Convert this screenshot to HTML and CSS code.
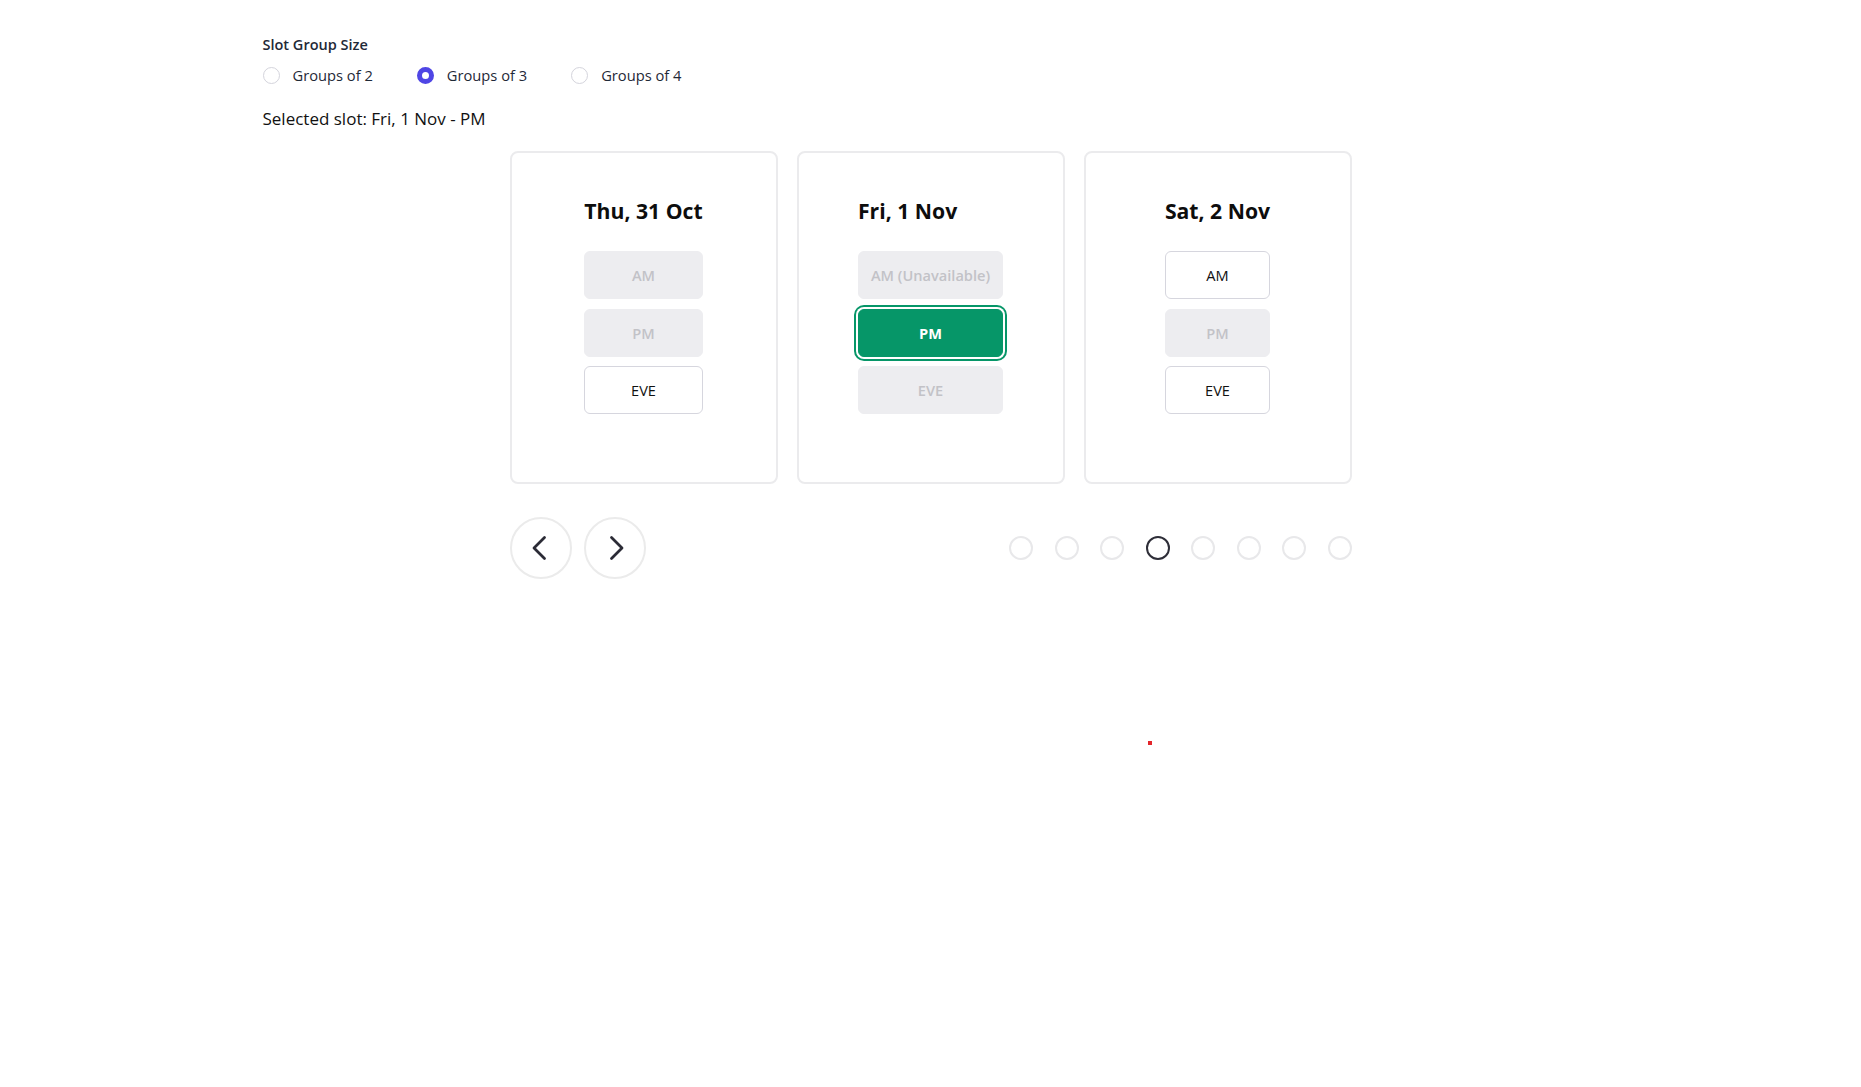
FILE: index.html
```html
<!DOCTYPE html>
<html lang="en">
<head>
<meta charset="utf-8">
<title>Slot picker</title>
<link rel="stylesheet" href="styles.css">
</head>
<body>
<div class="container">
  <div class="group-label">Slot Group Size</div>
  <div class="radio-row">
    <label class="radio-item"><input type="radio" name="size" class="radio"><span>Groups of 2</span></label>
    <label class="radio-item"><input type="radio" name="size" class="radio" checked><span>Groups of 3</span></label>
    <label class="radio-item"><input type="radio" name="size" class="radio"><span>Groups of 4</span></label>
  </div>
  <p class="selected">Selected slot: Fri, 1 Nov - PM</p>

  <div class="carousel">
    <div class="cards">
      <div class="card">
        <div class="col">
          <h3 class="day">Thu, 31 Oct</h3>
          <button class="slot off">AM</button>
          <button class="slot off">PM</button>
          <button class="slot">EVE</button>
        </div>
      </div>
      <div class="card">
        <div class="col">
          <h3 class="day">Fri, 1 Nov</h3>
          <button class="slot off">AM (Unavailable)</button>
          <button class="slot picked">PM</button>
          <button class="slot off">EVE</button>
        </div>
      </div>
      <div class="card">
        <div class="col">
          <h3 class="day">Sat, 2 Nov</h3>
          <button class="slot">AM</button>
          <button class="slot off">PM</button>
          <button class="slot">EVE</button>
        </div>
      </div>
    </div>

    <div class="nav">
      <div class="arrows">
        <button class="arrow" aria-label="Previous">
          <svg width="28" height="28" viewBox="0 0 28 28"><polyline points="17.5,3.5 7,14 17.5,24.5" fill="none" stroke="#2b2b36" stroke-width="2.8" stroke-linecap="round" stroke-linejoin="round"/></svg>
        </button>
        <button class="arrow" aria-label="Next">
          <svg width="28" height="28" viewBox="0 0 28 28"><polyline points="10.5,3.5 21,14 10.5,24.5" fill="none" stroke="#2b2b36" stroke-width="2.8" stroke-linecap="round" stroke-linejoin="round"/></svg>
        </button>
      </div>
      <div class="dots">
        <span class="dot"></span>
        <span class="dot"></span>
        <span class="dot"></span>
        <span class="dot active"></span>
        <span class="dot"></span>
        <span class="dot"></span>
        <span class="dot"></span>
        <span class="dot"></span>
      </div>
    </div>
  </div>
</div>
<span class="cursor-dot"></span>
</body>
</html>
```

FILE: styles.css
```css
* { box-sizing: border-box; }

html, body {
  margin: 0;
  padding: 0;
  background: #ffffff;
}

body {
  font-family: "Segoe UI", "Open Sans", "Noto Sans", sans-serif;
  color: #111111;
  position: relative;
  min-height: 1087px;
}

.container {
  max-width: 1400px;
  margin: 0 auto;
  padding: 35px 32px 0;
}

.group-label {
  font-size: 14.5px;
  line-height: 20px;
  font-weight: 600;
  color: #1f2937;
  margin-bottom: 10px;
}

.radio-row {
  display: flex;
  gap: 44px;
  height: 20px;
  align-items: center;
}

.radio-item {
  display: flex;
  align-items: center;
  gap: 13px;
  font-size: 14.7px;
  line-height: 20px;
  color: #1f2937;
}

.radio {
  appearance: none;
  -webkit-appearance: none;
  margin: 0;
  width: 17px;
  height: 17px;
  border-radius: 50%;
  border: 1px solid #d4d4dc;
  background: #fff;
  flex: none;
}

.radio:checked {
  border: 5.5px solid #4f46e5;
  background: #ffffff;
}

.selected {
  margin: 22px 0 0;
  font-size: 17px;
  line-height: 24px;
  color: #111111;
}

.carousel {
  width: 842px;
  margin: 20px auto 0;
}

.cards {
  display: grid;
  grid-template-columns: repeat(3, 1fr);
  gap: 19px;
}

.card {
  border: 2px solid #ebebed;
  border-radius: 8px;
  padding: 44px 0 68px;
  display: flex;
  justify-content: center;
}

.col {
  display: flex;
  flex-direction: column;
  align-items: stretch;
  gap: 9.5px;
}

.day {
  margin: 0 0 16.5px;
  font-size: 21.2px;
  line-height: 28px;
  font-weight: 700;
  color: #0d0d0d;
  white-space: nowrap;
}

.slot {
  font-family: inherit;
  font-size: 14.6px;
  line-height: 22px;
  padding: 12px 12px;
  border: 1px solid #d6d6de;
  border-radius: 6px;
  background: #ffffff;
  color: #111111;
  white-space: nowrap;
}

.slot.off {
  background: #ededf0;
  border-color: #ededf0;
  color: #c2c2c7;
  font-weight: 600;
}

.slot.picked {
  background: #069668;
  border-color: #069668;
  color: #ffffff;
  font-weight: 700;
  box-shadow: 0 0 0 2px #ffffff, 0 0 0 4px #069668;
}

.nav {
  display: flex;
  justify-content: space-between;
  align-items: center;
  margin-top: 33px;
}

.arrows {
  display: flex;
  gap: 12px;
}

.arrow {
  width: 62px;
  height: 62px;
  border-radius: 50%;
  border: 2px solid #ebebeb;
  background: #fff;
  padding: 0;
  display: flex;
  align-items: center;
  justify-content: center;
}

.dots {
  display: flex;
  gap: 21.5px;
}

.dot {
  width: 24px;
  height: 24px;
  border-radius: 50%;
  border: 2px solid #e8e8ea;
}

.dot.active {
  border-color: #2e2e38;
}

.cursor-dot {
  position: absolute;
  left: 1148px;
  top: 741px;
  width: 4px;
  height: 4px;
  background: #e3262b;
}
```
